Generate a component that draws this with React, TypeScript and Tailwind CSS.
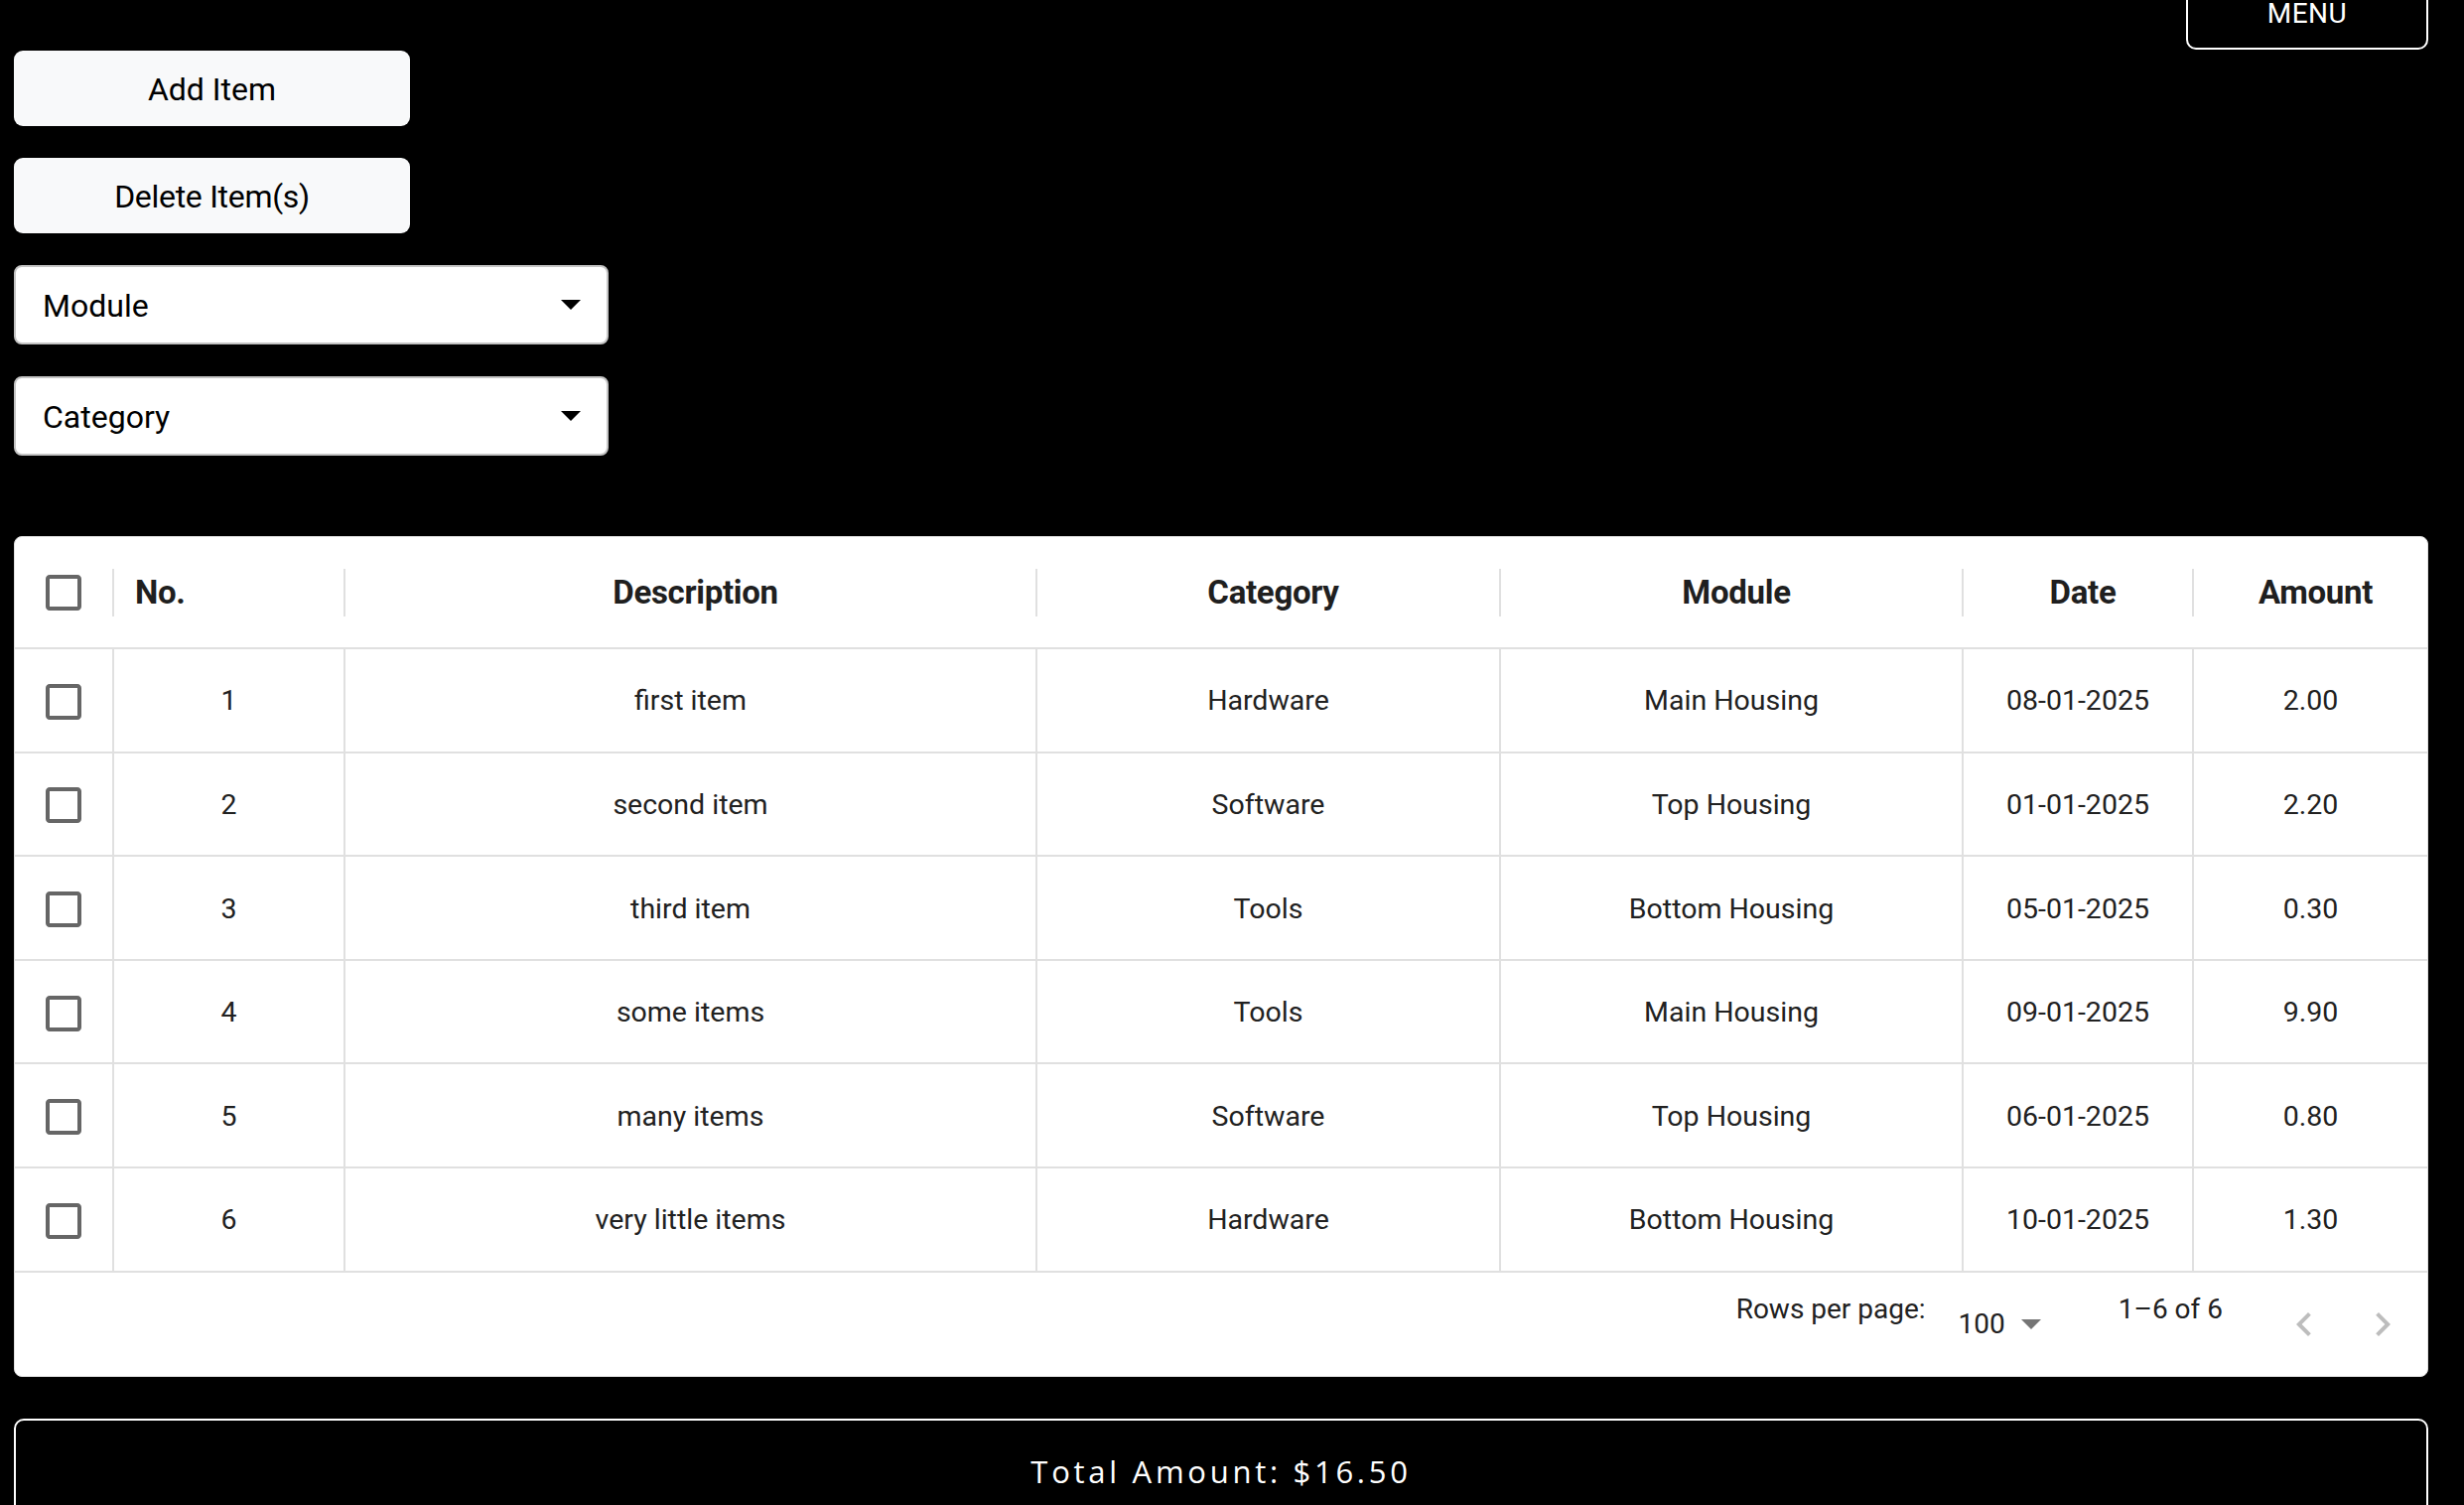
import React from 'react';

type Row = {
  no: number;
  description: string;
  category: string;
  module: string;
  date: string;
  amount: string;
};

const rows: Row[] = [
  { no: 1, description: 'first item', category: 'Hardware', module: 'Main Housing', date: '08-01-2025', amount: '2.00' },
  { no: 2, description: 'second item', category: 'Software', module: 'Top Housing', date: '01-01-2025', amount: '2.20' },
  { no: 3, description: 'third item', category: 'Tools', module: 'Bottom Housing', date: '05-01-2025', amount: '0.30' },
  { no: 4, description: 'some items', category: 'Tools', module: 'Main Housing', date: '09-01-2025', amount: '9.90' },
  { no: 5, description: 'many items', category: 'Software', module: 'Top Housing', date: '06-01-2025', amount: '0.80' },
  { no: 6, description: 'very little items', category: 'Hardware', module: 'Bottom Housing', date: '10-01-2025', amount: '1.30' },
];

const cols = 'grid grid-cols-[100px_233px_697px_467px_466px_232px_1fr]';

function CheckboxIcon() {
  return (
    <svg viewBox="0 0 24 24" className="h-[48px] w-[48px] fill-[#666666]">
      <path d="M19 5v14H5V5h14m0-2H5c-1.11 0-2 .9-2 2v14c0 1.1.89 2 2 2h14c1.1 0 2-.9 2-2V5c0-1.1-.9-2-2-2z" />
    </svg>
  );
}

function DropArrow({ className }: { className: string }) {
  return (
    <svg viewBox="7 10 10 5" className={className}>
      <path d="M7 10l5 5 5-5z" />
    </svg>
  );
}

function SelectBox({ label }: { label: string }) {
  return (
    <div className="flex h-[80px] w-[599px] items-center justify-between rounded-[8px] border-2 border-[#c4c4c4] bg-white pl-[27px] pr-[26px]">
      <span className="pt-[2px] text-[32px] text-black">{label}</span>
      <DropArrow className="h-[10px] w-[20px] fill-black" />
    </div>
  );
}

function HeaderCell({ label, align = 'center', separator = true }: { label: string; align?: 'left' | 'center'; separator?: boolean }) {
  return (
    <div className="flex items-center">
      <span
        className={
          align === 'left'
            ? 'flex-1 pl-[21px] pt-[1px] text-left text-[33px] font-bold tracking-[-0.3px] text-[#1f1f1f]'
            : 'flex-1 pl-[10px] pt-[1px] text-center text-[33px] font-bold tracking-[-0.3px] text-[#1f1f1f]'
        }
      >
        {label}
      </span>
      {separator && <div className="h-[48px] w-[2px] bg-[#e0e0e0]" />}
    </div>
  );
}

function BodyCell({ children, last = false }: { children: React.ReactNode; last?: boolean }) {
  return (
    <div
      className={
        last
          ? 'flex items-center justify-center pt-[3px] text-[28.5px] text-[#212121]'
          : 'flex items-center justify-center border-r-2 border-[#e0e0e0] pt-[3px] text-[28.5px] text-[#212121]'
      }
    >
      {children}
    </div>
  );
}

export default function App() {
  const total = rows.reduce((sum, r) => sum + parseFloat(r.amount), 0);

  return (
    <div className="h-screen w-screen overflow-hidden bg-black font-[Roboto,sans-serif]">
      <div className="flex justify-end pr-[36px]">
        <button
          type="button"
          className="mt-[-22px] flex h-[72px] w-[244px] items-center justify-center rounded-[10px] border-2 border-white text-[28px] tracking-[0.5px] text-white"
        >
          MENU
        </button>
      </div>

      <div className="flex flex-col gap-[32px] pl-[14px] pt-px">
        <button type="button" className="h-[76px] w-[399px] rounded-[9px] bg-[#f8f9fa] pt-[2px] text-[32px] text-black">
          Add Item
        </button>
        <button type="button" className="h-[76px] w-[399px] rounded-[9px] bg-[#f8f9fa] pt-[2px] text-[32px] tracking-[-0.3px] text-black">
          Delete Item(s)
        </button>
        <SelectBox label="Module" />
        <SelectBox label="Category" />
      </div>

      <div className="mt-[81px] pl-[14px] pr-[36px]">
        <div className="overflow-hidden rounded-[8px] border border-[#e0e0e0] bg-white">
          <div className={`${cols} h-[113px] border-b-2 border-[#e0e0e0]`}>
            <div className="flex items-center">
              <div className="flex flex-1 justify-center">
                <CheckboxIcon />
              </div>
              <div className="h-[48px] w-[2px] bg-[#e0e0e0]" />
            </div>
            <HeaderCell label="No." align="left" />
            <HeaderCell label="Description" />
            <HeaderCell label="Category" />
            <HeaderCell label="Module" />
            <HeaderCell label="Date" />
            <HeaderCell label="Amount" separator={false} />
          </div>

          {rows.map((r) => (
            <div key={r.no} className={`${cols} h-[104.6px] border-b-2 border-[#e0e0e0]`}>
              <BodyCell>
                <CheckboxIcon />
              </BodyCell>
              <BodyCell>{r.no}</BodyCell>
              <BodyCell>{r.description}</BodyCell>
              <BodyCell>{r.category}</BodyCell>
              <BodyCell>{r.module}</BodyCell>
              <BodyCell>{r.date}</BodyCell>
              <BodyCell last>{r.amount}</BodyCell>
            </div>
          ))}

          <div className="flex h-[104px] items-center justify-end pr-[21px] text-[28px] text-[#212121]">
            <span className="mb-[30px]">Rows per page:</span>
            <div className="ml-[33px] flex items-center">
              <span>100</span>
              <DropArrow className="ml-[16px] h-[10px] w-[20px] fill-[#757575]" />
            </div>
            <span className="mb-[30px] ml-[78px]">1–6 of 6</span>
            <div className="ml-[58px] flex items-center gap-[31px]">
              <svg viewBox="0 0 24 24" className="h-[48px] w-[48px] fill-[#bdbdbd]">
                <path d="M15.41 16.59 10.83 12l4.58-4.59L14 6l-6 6 6 6z" />
              </svg>
              <svg viewBox="0 0 24 24" className="h-[48px] w-[48px] fill-[#bdbdbd]">
                <path d="M8.59 16.59 13.17 12 8.59 7.41 10 6l6 6-6 6z" />
              </svg>
            </div>
          </div>
        </div>

        <div className="mt-[42px] flex h-[108px] items-center justify-center rounded-[10px] border-2 border-white">
          <span className="font-['Open_Sans',sans-serif] text-[31px] tracking-[0.12em] text-white">
            Total Amount: ${total.toFixed(2)}
          </span>
        </div>
      </div>
    </div>
  );
}
